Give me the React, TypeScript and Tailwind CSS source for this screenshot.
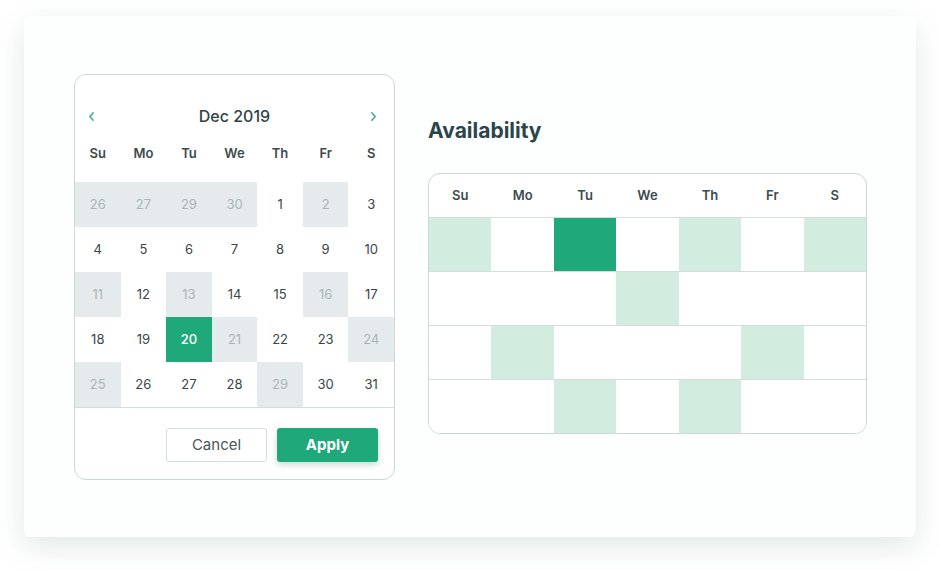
import React from "react";

type Day = { n: number; off?: boolean; sel?: boolean };

const weekdays = ["Su", "Mo", "Tu", "We", "Th", "Fr", "S"];

const d = (n: number, off = false, sel = false): Day => ({ n, off, sel });

// сетка месяца, как на макете
const weeks: Day[][] = [
  [d(26, true), d(27, true), d(29, true), d(30, true), d(1), d(2, true), d(3)],
  [d(4), d(5), d(6), d(7), d(8), d(9), d(10)],
  [d(11, true), d(12), d(13, true), d(14), d(15), d(16, true), d(17)],
  [d(18), d(19), d(20, false, true), d(21, true), d(22), d(23), d(24, true)],
  [d(25, true), d(26), d(27), d(28), d(29, true), d(30), d(31)],
];

// 0 — пусто, 1 — светлый, 2 — выбранный
const availability: number[][] = [
  [1, 0, 2, 0, 1, 0, 1],
  [0, 0, 0, 1, 0, 0, 0],
  [0, 1, 0, 0, 0, 1, 0],
  [0, 0, 1, 0, 1, 0, 0],
];

const Chevron: React.FC<{ dir: "left" | "right" }> = ({ dir }) => (
  <svg width="7" height="11" viewBox="0 0 7 11" fill="none">
    <path
      d={dir === "left" ? "M5.2 1.8L1.8 5.5L5.2 9.2" : "M1.8 1.8L5.2 5.5L1.8 9.2"}
      stroke="#3aa883"
      strokeWidth="1.4"
      strokeLinecap="round"
      strokeLinejoin="round"
    />
  </svg>
);

const Calendar: React.FC = () => (
  <div className="w-[321px] shrink-0 rounded-xl border border-[#c9d7d7] bg-white">
    {/* Заголовок месяца */}
    <div className="mt-[29px] grid h-6 grid-cols-[1fr_auto_1fr] items-center px-[8px]">
      <button className="flex h-6 w-4 items-center justify-center justify-self-start">
        <Chevron dir="left" />
      </button>
      <span className="text-[16px] font-medium text-[#2f4446]">Dec 2019</span>
      <button className="mr-[5px] flex h-6 w-4 items-center justify-center justify-self-end">
        <Chevron dir="right" />
      </button>
    </div>

    <div className="mt-[6px] mb-[8px] grid h-[40px] grid-cols-7 items-center">
      {weekdays.map((w) => (
        <span key={w} className="text-center text-[13px] font-semibold text-[#3d4b4d]">
          {w}
        </span>
      ))}
    </div>

    <div className="grid grid-cols-7">
      {weeks.flat().map((day, i) => (
        <div
          key={i}
          className={`flex h-[45px] items-center justify-center text-[13px] ${
            day.sel
              ? "bg-[#1fa97a] font-medium text-white"
              : day.off
              ? "bg-[#e5eaec] text-[#aab5b7]"
              : "text-[#3a4547]"
          }`}
        >
          {day.n}
        </div>
      ))}
    </div>

    {/* Кнопки */}
    <div className="flex justify-end gap-[10px] border-t border-[#d3dede] pt-[20px] pr-[16px] pb-[17px]">
      <button className="h-[34px] w-[101px] rounded-[3px] border border-[#d2dcdc] bg-white text-[15px] text-[#4b5659]">
        Cancel
      </button>
      <button className="h-[34px] w-[101px] rounded-[3px] bg-[#1fa97a] text-[15px] font-bold text-white shadow-[0_3px_6px_rgba(20,90,60,0.22)]">
        Apply
      </button>
    </div>
  </div>
);

const Availability: React.FC = () => (
  <div className="mt-[43px] w-[439px] shrink-0">
    <h2 className="h-[28px] text-[21px] leading-[28px] font-bold text-[#2b464b]">Availability</h2>
    <div className="mt-[28px] overflow-hidden rounded-xl border border-[#c9d7d7] bg-white">
      <div className="grid h-[43px] grid-cols-7 items-center">
        {weekdays.map((w) => (
          <span key={w} className="text-center text-[13px] font-semibold text-[#3d4b4d]">
            {w}
          </span>
        ))}
      </div>
      {availability.map((row, r) => (
        <div key={r} className="grid h-[54px] grid-cols-7 border-t border-[#d3dddd]">
          {row.map((v, c) => (
            <div
              key={c}
              className={v === 2 ? "bg-[#1fa97a]" : v === 1 ? "bg-[#d2ecdf]" : "bg-white"}
            />
          ))}
        </div>
      ))}
    </div>
  </div>
);

const App: React.FC = () => (
  <div
    className="min-h-[570px] w-full bg-white pt-[16px] pl-[24px]"
    style={{ fontFamily: "Inter, 'Noto Sans', sans-serif" }}
  >
    <div className="flex h-[521px] w-[892px] gap-[33px] rounded-md bg-[#fdfefe] pt-[58px] pl-[50px] shadow-[0_10px_30px_rgba(40,100,70,0.14)]">
      <div className="self-start">
        <Calendar />
      </div>
      <Availability />
    </div>
  </div>
);

export default App;
